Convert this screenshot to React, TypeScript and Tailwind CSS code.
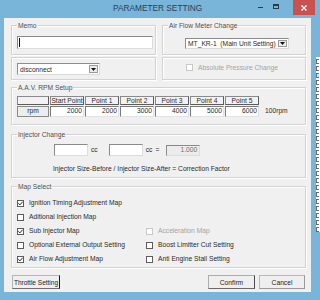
import React from "react";

// small win32-ish building blocks
const Group = ({
  label,
  className,
  children,
}: {
  label?: string;
  className?: string;
  children?: React.ReactNode;
}) => (
  <div className={`relative border border-[#d3d3d3] shadow-[inset_1px_1px_0_#fff,1px_1px_0_#fff] ${className || ""}`}>
    {label && (
      <span className="absolute -top-[5px] left-[5px] bg-[#f0f0f0] px-[1px] leading-[9px] text-[#505050]">
        {label}
      </span>
    )}
    {children}
  </div>
);

const Check = ({ checked, disabled }: { checked?: boolean; disabled?: boolean }) => (
  <span
    className={`flex h-[7px] w-[7px] shrink-0 items-center justify-center border bg-white ${
      disabled ? "border-[#c8c8c8]" : "border-[#5c5c5c]"
    }`}
  >
    {checked && (
      <svg width="5" height="5" viewBox="0 0 5 5">
        <path d="M0.4 2.3 L1.9 3.9 L4.7 0.7" fill="none" stroke="#222" strokeWidth="1" />
      </svg>
    )}
  </span>
);

const Combo = ({ text, className }: { text: string; className?: string }) => (
  <div className={`flex items-stretch border border-[#8d8d8d] border-b-[#dadada] border-r-[#dadada] bg-white ${className || ""}`}>
    <span className="flex-1 self-center overflow-hidden whitespace-pre pl-[2px] leading-[9px]">{text}</span>
    <span className="my-px mr-px flex w-[9px] items-center justify-center border border-[#9a9a9a] bg-[#ececec]">
      <svg width="5" height="3" viewBox="0 0 5 3">
        <path d="M0 0 H5 L2.5 3 Z" fill="#111" />
      </svg>
    </span>
  </div>
);

const HeadCell = ({ children, w = "w-[34px]" }: { children?: React.ReactNode; w?: string }) => (
  <div className={`${w} flex h-[9px] items-center justify-center border border-[#8a8a8a] border-b-[#5c5c5c] border-r-[#5c5c5c] bg-[#f2f2f2] leading-[8px]`}>
    {children}
  </div>
);

const ValCell = ({ v }: { v: string }) => (
  <div className="flex h-[11px] w-[34px] items-center justify-end border border-[#7a7a7a] border-b-[#e2e2e2] border-r-[#e2e2e2] bg-white pr-[1px]">
    {v}
  </div>
);

const Btn = ({
  children,
  className,
}: {
  children: React.ReactNode;
  className?: string;
}) => (
  <div className={`flex h-[14px] items-center justify-center whitespace-nowrap border bg-[#efefef] leading-[9px] text-[#222] ${className || ""}`}>
    {children}
  </div>
);

const mapLeft = [
  { t: "Ignition Timing Adjustment Map", c: true },
  { t: "Aditional Injection Map", c: false },
  { t: "Sub Injector Map", c: true },
  { t: "Optional External Output Setting", c: false },
  { t: "Air Flow Adjustment Map", c: true },
];

const mapRight: ({ t: string; d?: boolean } | null)[] = [
  null,
  null,
  { t: "Acceleration Map", d: true },
  { t: "Boost Limitter Cut Setting" },
  { t: "Anti Engine Stall Setting" },
];

const rpmHead = ["Start Point", "Point 1", "Point 2", "Point 3", "Point 4", "Point 5"];
const rpmVals = ["2000", "2000", "3000", "4000", "5000", "6000"];

export default function App() {
  return (
    <div className="flex h-[300px] w-[320px] overflow-hidden bg-[#79b5d8] font-['Liberation_Sans',Arial,sans-serif] text-[6.7px] text-[#2a2a2a]">
      {/* the dialog window */}
      <div className="flex w-[316px] flex-col">
        <div className="flex h-[18px] items-start">
          <span className="pl-[113px] pt-[3px] text-[8.3px] leading-[11px] text-[#26405c]">PARAMETER SETTING</span>
          <div className="ml-auto mr-px flex items-start">
            <span className="flex h-[15px] w-[15px] items-start justify-center pt-[7px]">
              <span className="h-px w-[5px] bg-[#2d3b48]" />
            </span>
            <span className="flex h-[15px] w-[16px] items-start justify-center pt-[4px]">
              <span className="h-[5px] w-[6px] border border-t-2 border-[#2d3b48]" />
            </span>
            <span className="w-[9px]" />
            <span className="flex h-[15px] w-[22px] items-center justify-center bg-[#c9514f]">
              <svg width="6" height="6" viewBox="0 0 6 6">
                <path d="M0.5 0.5 L5.5 5.5 M5.5 0.5 L0.5 5.5" stroke="#fff" strokeWidth="1.4" />
              </svg>
            </span>
          </div>
        </div>

        <div className="flex pl-[4px]">
          <div className="flex h-[274px] w-[307px] flex-col bg-[#f0f0f0] pl-[7px] pr-[5px] pt-[7px]">
            {/* row 1 */}
            <div className="flex h-[30px] gap-[6px]">
              <Group label="Memo" className="w-[145px] pl-[5px] pt-[10px]">
                <div className="flex h-[13px] w-[136px] items-center border border-[#8a8a8a] border-b-[#dcdcdc] border-r-[#dcdcdc] bg-white pl-[1px]">
                  <span className="h-[9px] w-px bg-[#111]" />
                </div>
              </Group>
              <Group label="Air Flow Meter Change" className="flex-1 pl-[22px] pt-[12px]">
                <Combo text="MT_KR-1  (Main Unit Setting)" className="h-[11px] w-[104px]" />
              </Group>
            </div>

            {/* row 2 */}
            <div className="mt-[2px] flex h-[23px] gap-[6px]">
              <Group className="w-[145px] pl-[5px] pt-[5px]">
                <Combo text="disconnect" className="h-[12px] w-[83px]" />
              </Group>
              <Group className="flex flex-1 items-start gap-[5px] pl-[23px] pt-[6px]">
                <Check disabled />
                <span className="leading-[7px] text-[#a3a3a3]">Absolute Pressure Change</span>
              </Group>
            </div>

            {/* AAV rpm */}
            <Group label="A.A.V. RPM Setup" className="mt-[7px] h-[38px] pl-[5px] pt-[8px]">
              <div className="flex gap-px">
                <HeadCell w="w-[32px]" />
                {rpmHead.map((h) => (
                  <HeadCell key={h}>{h}</HeadCell>
                ))}
              </div>
              <div className="mt-px flex items-center gap-px">
                <div className="flex h-[11px] w-[32px] items-center justify-center border border-[#8a8a8a] bg-[#ededed]">rpm</div>
                {rpmVals.map((v, i) => (
                  <ValCell key={i} v={v} />
                ))}
                <span className="ml-[5px]">100rpm</span>
              </div>
            </Group>

            {/* injector */}
            <Group label="Injector Change" className="mt-[9px] h-[44px] pl-[42px] pt-[9px]">
              <div className="flex items-center">
                <div className="h-[12px] w-[34px] border border-[#8a8a8a] border-b-[#dcdcdc] border-r-[#dcdcdc] bg-white" />
                <span className="ml-[3px]">cc</span>
                <div className="ml-[11px] h-[12px] w-[34px] border border-[#8a8a8a] border-b-[#dcdcdc] border-r-[#dcdcdc] bg-white" />
                <span className="ml-[3px]">cc</span>
                <span className="ml-[3px]">=</span>
                <div className="ml-[7px] flex h-[11px] w-[34px] items-center justify-end border border-[#8a8a8a] border-b-[#dcdcdc] border-r-[#dcdcdc] bg-[#ececec] pr-[2px] text-[#707070]">
                  1.000
                </div>
              </div>
              <div className="-ml-[1px] mt-[8px] leading-[9px]">
                Injector Size-Before / Injector Size-After = Correction Factor
              </div>
            </Group>

            {/* map select */}
            <Group label="Map Select" className="mt-[8px] flex h-[82px] pl-[5px] pt-[9px]">
              <div className="flex w-[129px] flex-col">
                {mapLeft.map((m) => (
                  <div key={m.t} className="flex h-[14px] items-center gap-[5px] whitespace-nowrap">
                    <Check checked={m.c} />
                    <span>{m.t}</span>
                  </div>
                ))}
              </div>
              <div className="flex flex-col">
                {mapRight.map((m, i) =>
                  m ? (
                    <div key={i} className="flex h-[14px] items-center gap-[5px] whitespace-nowrap">
                      <Check disabled={m.d} />
                      <span className={m.d ? "text-[#a3a3a3]" : ""}>{m.t}</span>
                    </div>
                  ) : (
                    <div key={i} className="h-[14px]" />
                  )
                )}
              </div>
            </Group>

            {/* buttons */}
            <div className="mt-[7px] flex">
              <Btn className="ml-px w-[48px] border-[#b5b5b5] border-b-[#707070] border-r-[#1a1a1a] text-[6.5px]">Throttle Setting</Btn>
              <Btn className="ml-auto w-[47px] border-[#adadad] border-b-[#6a6a6a] border-r-[#4a4a4a]">Confirm</Btn>
              <Btn className="ml-[4px] mr-px w-[46px] border-[#b8b8b8] border-b-[#9a9a9a] border-r-[#9a9a9a]">Cancel</Btn>
            </div>
          </div>
        </div>
      </div>

      {/* edge of the window behind */}
      <div className="w-[4px] pt-[57px]">
        <div className="flex h-[175px] flex-col gap-[2px] bg-white pt-[2px]">
          {Array.from({ length: 25 }).map((_, i) => (
            <span
              key={i}
              className={`h-[5px] w-[3px] shrink-0 border border-r-0 ${
                i === 2 ? "border-[#2f7fd0] bg-[#cfe3f7]" : "border-[#6a6a6a]"
              }`}
            />
          ))}
        </div>
      </div>
    </div>
  );
}
